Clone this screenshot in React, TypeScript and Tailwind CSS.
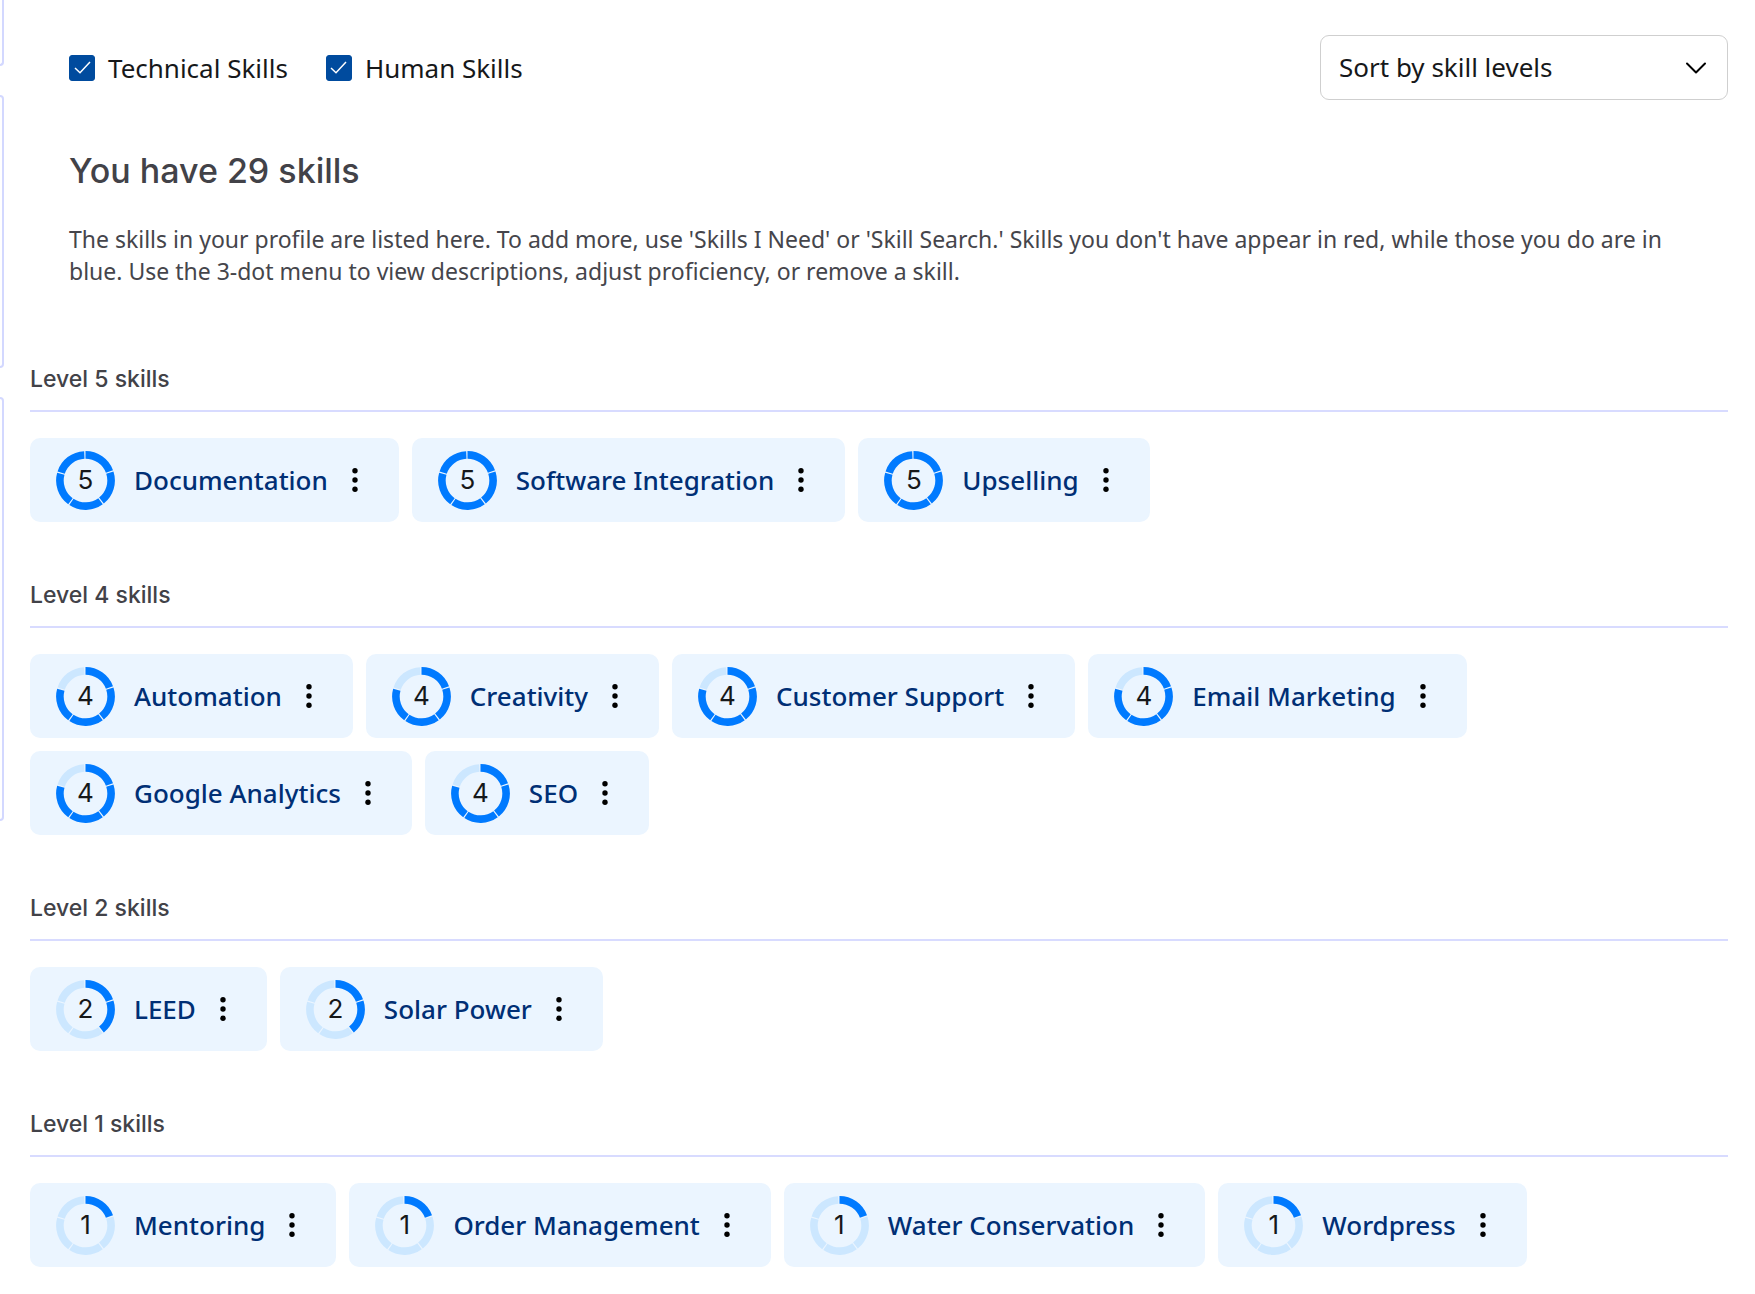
import React, { useState } from 'react';

interface SkillGroup {
  level: number;
  skills: string[];
}

const groups: SkillGroup[] = [
  { level: 5, skills: ['Documentation', 'Software Integration', 'Upselling'] },
  {
    level: 4,
    skills: ['Automation', 'Creativity', 'Customer Support', 'Email Marketing', 'Google Analytics', 'SEO']
  },
  { level: 2, skills: ['LEED', 'Solar Power'] },
  { level: 1, skills: ['Mentoring', 'Order Management', 'Water Conservation', 'Wordpress'] }
];

const MAX_LEVEL = 5;
const RING_CENTER = 29.5;
const RING_RADIUS = 25.6;

const ringPoint = (degrees: number) => {
  const angle = (degrees * Math.PI) / 180;
  const x = RING_CENTER + RING_RADIUS * Math.sin(angle);
  const y = RING_CENTER - RING_RADIUS * Math.cos(angle);
  return `${x.toFixed(2)} ${y.toFixed(2)}`;
};

const segmentPath = (index: number) => {
  const start = index * 72;
  return `M${ringPoint(start)}A${RING_RADIUS} ${RING_RADIUS} 0 0 1 ${ringPoint(start + 69.4)}`;
};

// Ring split in five parts, filled clockwise from the top
function LevelRing({ level }: { level: number }) {
  return (
    <div className="grid size-[59px] shrink-0 place-items-center">
      <svg viewBox="0 0 59 59" className="col-start-1 row-start-1 size-full" fill="none" aria-hidden="true">
        {Array.from({ length: MAX_LEVEL }, (_, i) => (
          <path
            key={i}
            d={segmentPath(i)}
            strokeWidth="7.6"
            className={i < level ? 'stroke-[#007aff]' : 'stroke-[#cce7ff]'}
          />
        ))}
      </svg>
      <span className="col-start-1 row-start-1 font-['Inter',sans-serif] text-[26px] leading-8 text-[#16181a]">
        {level}
      </span>
    </div>
  );
}

function SkillChip({ name, level }: { name: string; level: number }) {
  return (
    <li className="flex h-[84px] items-center rounded-[10px] bg-[#ebf5ff] pr-[38px] pl-[26px]">
      <LevelRing level={level} />
      <span className="ml-[19px] text-[26px] leading-9 font-medium text-[#002f75]">{name}</span>
      <button type="button" aria-label={`Options for ${name}`} className="ml-[21px] cursor-pointer">
        <svg width="12" height="28" viewBox="0 0 12 28" fill="#000" aria-hidden="true">
          <circle cx="6" cy="4.7" r="2.7" />
          <circle cx="6" cy="14" r="2.7" />
          <circle cx="6" cy="23.3" r="2.7" />
        </svg>
      </button>
    </li>
  );
}

interface FilterCheckboxProps {
  label: string;
  checked: boolean;
  onChange: (checked: boolean) => void;
}

function FilterCheckbox({ label, checked, onChange }: FilterCheckboxProps) {
  return (
    <label className="flex cursor-pointer items-center gap-[13px] text-[26px] leading-9 text-[#16181a]">
      <span className="grid place-items-center">
        <input
          type="checkbox"
          checked={checked}
          onChange={(e) => onChange(e.target.checked)}
          className="col-start-1 row-start-1 size-[26px] appearance-none rounded-[3px] border border-[#004b9e] checked:bg-[#004b9e]"
        />
        {checked && (
          <svg
            width="17"
            height="13"
            viewBox="0 0 17 13"
            fill="none"
            className="pointer-events-none col-start-1 row-start-1"
            aria-hidden="true"
          >
            <path d="M1 7l5 4.7L16 1" stroke="#fff" strokeWidth="1.5" />
          </svg>
        )}
      </span>
      {label}
    </label>
  );
}

export default function App() {
  const [showTechnical, setShowTechnical] = useState(true);
  const [showHuman, setShowHuman] = useState(true);

  return (
    <div className="flex min-h-screen bg-white font-['Noto_Sans',sans-serif]">
      {/* Edge of the side column */}
      <aside className="flex w-1 shrink-0 flex-col gap-[29px]">
        <div className="h-[66px] rounded-br-[10px] border-r-2 border-b-2 border-[#d3d8ff]" />
        <div className="h-[273px] rounded-r-[10px] border-y-2 border-r-2 border-[#d3d8ff]" />
        <div className="h-[424px] rounded-r-[10px] border-y-2 border-r-2 border-[#d3d8ff]" />
      </aside>

      <main className="flex-1 pt-[35px] pr-[27px] pb-7 pl-[26px]">
        <div className="flex items-center justify-between pl-[39px]">
          <div className="flex gap-[38px]">
            <FilterCheckbox label="Technical Skills" checked={showTechnical} onChange={setShowTechnical} />
            <FilterCheckbox label="Human Skills" checked={showHuman} onChange={setShowHuman} />
          </div>

          <div className="grid w-[408px] items-center">
            <select
              aria-label="Sort skills"
              className="col-start-1 row-start-1 h-[65px] appearance-none rounded-[9px] border border-[#cfcfcf] bg-white px-[18px] text-[26px] text-[#16181a]"
            >
              <option>Sort by skill levels</option>
              <option>Sort by name</option>
            </select>
            <svg
              width="22"
              height="14"
              viewBox="0 0 22 14"
              fill="none"
              className="pointer-events-none col-start-1 row-start-1 mr-[21px] justify-self-end"
              aria-hidden="true"
            >
              <path d="M2 2.5l9 9 9-9" stroke="#000" strokeWidth="2" strokeLinecap="round" strokeLinejoin="round" />
            </svg>
          </div>
        </div>

        <div className="px-[39px] pt-[47px]">
          <h1 className="font-['Inter',sans-serif] text-[34px] leading-12 font-medium text-[#424248]">
            You have 29 skills
          </h1>
          <p className="mt-7 text-[23px] leading-8 text-[#45454b]">
            The skills in your profile are listed here. To add more, use 'Skills I Need' or 'Skill Search.' Skills you
            don't have appear in red, while those you do are in blue. Use the 3-dot menu to view descriptions, adjust
            proficiency, or remove a skill.
          </p>
        </div>

        <div className="mt-[76px] flex flex-col gap-[57px]">
          {groups.map((group) => (
            <section key={group.level}>
              <h2 className="border-b-2 border-[#d8dbff] pb-[15px] font-['Inter',sans-serif] text-[23px] leading-8 font-medium text-[#424248]">
                Level {group.level} skills
              </h2>
              <ul className="mt-[26px] flex flex-wrap gap-[13px]">
                {group.skills.map((skill) => (
                  <SkillChip key={skill} name={skill} level={group.level} />
                ))}
              </ul>
            </section>
          ))}
        </div>
      </main>
    </div>
  );
}
